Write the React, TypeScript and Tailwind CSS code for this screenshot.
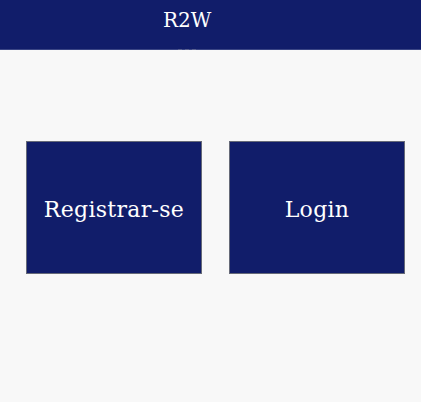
export default function App() {
  return (
    <div className="w-[421px] h-[402px] bg-[#f8f8f8] overflow-hidden" style={{ fontFamily: '"DejaVu Serif", serif' }}>
      <header className="relative h-[50px] bg-[#111d6a] border-b border-[#3a4585] flex items-start pl-[163px] pt-[10px]">
        <span className="text-white text-[20px] leading-[20px]">R2W</span>
        <div className="absolute left-[178px] top-[49px] flex gap-[3px]">
          <span className="w-[4px] h-[1px] bg-[#5a6190]" />
          <span className="w-[4px] h-[1px] bg-[#5a6190]" />
          <span className="w-[4px] h-[1px] bg-[#5a6190]" />
        </div>
      </header>
      <div className="flex pl-[26px] pt-[91px] gap-[27px]">
        <button className="w-[176px] h-[133px] bg-[#111d6a] border border-[#666a78] text-white text-[22px] tracking-[0.3px] flex items-center justify-center pt-[3px]">
          Registrar-se
        </button>
        <button className="w-[176px] h-[133px] bg-[#111d6a] border border-[#666a78] text-white text-[22px] tracking-[0.3px] flex items-center justify-center pt-[3px]">
          Login
        </button>
      </div>
    </div>
  );
}
